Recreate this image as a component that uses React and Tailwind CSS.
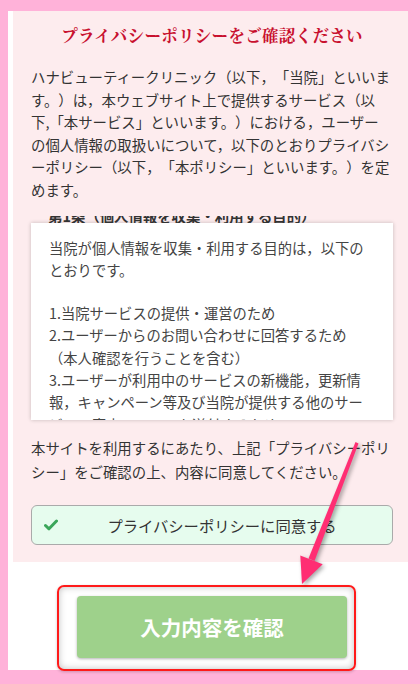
const jp = { fontFamily: '"Noto Sans CJK JP", "Noto Sans", sans-serif' };
const serifJp = { fontFamily: '"Noto Serif CJK JP", "Noto Sans CJK JP", serif' };

const INTRO = [
  "ハナビューティークリニック（以下，「当院」といいま",
  "す。）は，本ウェブサイト上で提供するサービス（以",
  "下,「本サービス」といいます。）における，ユーザー",
  "の個人情報の取扱いについて，以下のとおりプライバシ",
  "ーポリシー（以下，「本ポリシー」といいます。）を定",
  "めます。",
];

const PURPOSES = [
  "1.当院サービスの提供・運営のため",
  "2.ユーザーからのお問い合わせに回答するため",
  "（本人確認を行うことを含む）",
  "3.ユーザーが利用中のサービスの新機能，更新情",
  "報，キャンペーン等及び当院が提供する他のサー",
  "ビスの案内のメールを送付するため",
];

// annotation arrow drawn over the page
function Arrow() {
  return (
    <svg
      className="absolute inset-0 pointer-events-none drop-shadow-[2px_2px_2px_rgba(0,0,0,0.35)]"
      width="420"
      height="684"
      viewBox="0 0 420 684"
    >
      <polygon points="355.5,442 358.5,443.5 314.5,561 308.5,558.5" fill="#ff2e73" />
      <polygon points="302,584 300.3,555.4 322.7,564.2" fill="#ff2e73" />
    </svg>
  );
}

export default function App() {
  return (
    <div
      className="relative w-[420px] h-[684px] bg-[#ffb2d9] pt-[11px] pl-[8px] pr-[12px] overflow-hidden [text-spacing-trim:space-all]"
      style={jp}
    >
      <div className="bg-white pl-[5px] h-[659px] flex flex-col">
        <div className="bg-[#fdecee] pl-[18px] pr-[15px] pt-[14px] pb-[17px]">
          <h1
            className="text-center text-[16.5px] leading-[20px] font-bold text-[#c8102e] tracking-[0.3px]"
            style={serifJp}
          >
            プライバシーポリシーをご確認ください
          </h1>

          <div className="mt-[21px] text-[14.4px] leading-[22.5px] text-[#333] whitespace-nowrap">
            {INTRO.map((l) => (
              <div key={l}>{l}</div>
            ))}
          </div>

          {/* scroll box — heading above is scrolled mostly out of view */}
          <div className="mt-[15px] h-[7px] overflow-hidden flex items-end pl-[17px]">
            <div className="text-[14.4px] leading-[14px] font-bold text-[#333] whitespace-nowrap shrink-0">
              第1条（個人情報を収集・利用する目的）
            </div>
          </div>
          <div className="h-[197px] overflow-hidden bg-white shadow-[0_0_4px_rgba(0,0,0,0.22)] pl-[18px] pt-[14px] text-[14.3px] leading-[22.4px] text-[#444] whitespace-nowrap">
            <div className="mb-[20px]">
              <div>当院が個人情報を収集・利用する目的は，以下の</div>
              <div>とおりです。</div>
            </div>
            {PURPOSES.map((l) => (
              <div key={l}>{l}</div>
            ))}
          </div>

          <div className="mt-[16px] text-[14.4px] leading-[24px] text-[#333] whitespace-nowrap">
            <div>本サイトを利用するにあたり、上記「プライバシーポリ</div>
            <div>シー」をご確認の上、内容に同意してください。</div>
          </div>

          <label className="mt-[21px] h-[40px] flex items-center rounded-[6px] border border-[#aaa] bg-[#e6fcee] pl-[12px] pr-[10px] cursor-pointer">
            <svg width="14" height="12" viewBox="0 0 14 12" className="shrink-0">
              <path d="M1.5 6.5 L5 9.8 L12.5 2" fill="none" stroke="#3aa65a" strokeWidth="3" strokeLinecap="round" strokeLinejoin="round" />
            </svg>
            <span className="flex-1 text-center text-[15.3px] text-[#333] pl-[4px]">
              プライバシーポリシーに同意する
            </span>
          </label>
        </div>

        <div className="relative flex-1 pt-[34px] pl-[64px]">
          <button className="w-[270px] h-[62px] rounded-[4px] bg-[#9ed18b] text-white text-[20.5px] font-bold shadow-[0_1px_3px_rgba(0,0,0,0.3)]">
            入力内容を確認
          </button>
          <div className="absolute left-[44px] top-[23px] w-[299px] h-[86px] rounded-[7px] border-2 border-[#ff1a1a] shadow-[inset_0_0_7px_rgba(0,0,0,0.25),0_1px_3px_rgba(0,0,0,0.2)] pointer-events-none" />
        </div>
      </div>
      <Arrow />
    </div>
  );
}
